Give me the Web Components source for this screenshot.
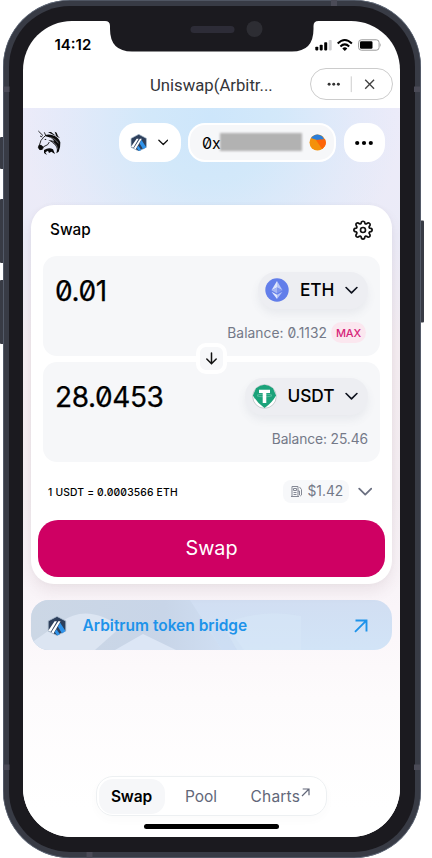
<!DOCTYPE html>
<html lang="en"><head><meta charset="utf-8"><title>Uniswap</title>
<style>html,body{margin:0;width:432px;height:858px;overflow:hidden;background:#fff}body{font-family:Inter,"Liberation Sans",sans-serif}</style></head>
<body><phone-frame>
<status-bar></status-bar><title-bar>Uniswap(Arbitr...</title-bar>
<swap-app></swap-app>
</phone-frame>
<script>
const define=(name,html)=>customElements.define(name,class extends HTMLElement{
  constructor(){super();const t=document.createElement('template');
    t.innerHTML='<style>:host,*{box-sizing:border-box}svg{display:block;flex:none}</style>'+html;
    this.attachShadow({mode:'open'}).append(t.content.cloneNode(true));}
});

define('phone-frame',`<style>
:host{display:block;position:relative;width:432px;height:858px}
.shell{margin-left:3px;width:417.5px;height:857.5px;padding:6px;border-radius:67px;background:#383b45;box-shadow:inset 0 0 0 .6px #667080;position:relative}
.bezel{height:100%;padding:15px 14px 14.5px;border-radius:61px;background:#1b1a1f}
.screen{height:816px;width:377px;border-radius:49px;overflow:hidden;background:#fff;display:flex;flex-direction:column}
.over{position:absolute;left:0;top:0}
</style><svg class="over" width="432" height="858"><g fill="#383b45"><rect x="0" y="137" width="6" height="32" rx="1"/><rect x="0" y="199" width="6" height="64" rx="1"/><rect x="0" y="280" width="6" height="64" rx="1"/><rect x="417" y="220.500" width="7" height="102" rx="1"/></g></svg>
<div class="shell"><div class="bezel"><div class="screen"><slot></slot></div></div></div>
<svg class="over" width="432" height="858"><g fill="#4b4b57"><rect x="3.500" y="86.500" width="6" height="5.500"/><rect x="414" y="86.500" width="6" height="5.500"/><rect x="3.500" y="764.500" width="6" height="5.500"/><rect x="414" y="764.500" width="6" height="5.500"/><rect x="331" y="0" width="6" height="6"/><rect x="86.500" y="852" width="6" height="5.500"/></g>
<path d="M105 20V21Q110 21 110 26V29Q110 51.500 132 51.500H292Q313.500 51.500 313.500 29V26Q313.500 21 318.500 21V20Z" fill="#1b1a1f"/><rect x="190.500" y="26" width="44" height="7" rx="3.500" fill="#2d2c37"/><circle cx="254.500" cy="29" r="8" fill="#2d2d33"/></svg>`);

define('status-bar',`<style>:host{display:flex;height:39px;padding:14px 18.500px 0 31.500px;align-items:flex-start;justify-content:space-between;flex:none}
b{font:600 15px/20px Inter,sans-serif;letter-spacing:0}svg{margin-top:3px}</style><b>14:12</b>
<svg width="68" height="16" viewBox="0 0 68 16"><rect x="1.300" y="8.800" width="3" height="3.600" rx=".8"/><rect x="5.700" y="6.800" width="3" height="5.600" rx=".8"/><rect x="10.200" y="4.300" width="3" height="8.100" rx=".8"/><rect x="14.700" y="2" width="3" height="10.400" rx=".8" fill="#d0d0d2"/>
<g fill="none" stroke="#000" stroke-width="2"><path d="M23.700 5.500Q30.800-1.500 37.900 5.500"/><path d="M26.400 8.500Q30.800 4.300 35.200 8.500"/></g><path d="M28.300 10.400Q30.800 8 33.300 10.400L30.800 13Z"/>
<rect x="44.600" y="1.800" width="20.500" height="10.400" rx="2.800" fill="#fff" stroke="#999"/><rect x="46" y="3.200" width="12.500" height="7.600" rx="1.300"/><path d="M66.300 5v4q1.500-2 0-4" fill="#999"/></svg>`);

define('title-bar',`<style>:host{display:flex;height:48px;padding:8px 7.500px 0 0;flex:none;font:400 16.700px/36px Roboto,sans-serif;color:#343539}
.t{width:287px;padding-left:127px;white-space:nowrap}.cap{width:82.500px;height:31.500px;border:1px solid #ccc;border-radius:16px}</style>
<div class="t"><slot></slot></div><svg class="cap" viewBox="0 0 81 30"><g fill="#333"><circle cx="18" cy="15.500" r="1.500"/><circle cx="22.700" cy="15.500" r="1.500"/><circle cx="27.400" cy="15.500" r="1.500"/></g><path d="M40.500 7.500v16" stroke="#ccc"/><path d="M54.700 11l9 9m0-9l-9 9" stroke="#444" stroke-width="1.400"/></svg>`);

define('chevron-icon',`<style>:host{display:block;width:var(--w,12px)}</style><svg width="100%" viewBox="0 0 12 8"><path d="M1 1.400L6 6.300L11 1.400" fill="none" stroke="currentColor" stroke-width="1.500" stroke-linecap="round" stroke-linejoin="round"/></svg>`);

define('arbitrum-icon',`<style>:host{display:block;width:var(--s,17px);height:var(--s,17px)}</style><svg width="100%" viewBox="0 0 20 20"><path d="M10 .4L18.800 5V15L10 19.600L1.200 15V5Z" fill="#2d3f5b" stroke="#aebfd0" stroke-width=".8"/><path d="M13 6.500l5.500 8.500-3.500 2.500L11 10.800zM9.500 13.300l3.400 4.900-2.700 1.300-2.400-3.500z" fill="#2f93ea"/><path d="M7.600 5.300H9.900L3.800 15.700 1.200 14.700zM11.300 5.300h2.200L6.500 17.500 4.300 16.300z" fill="#fff"/></svg>`);

define('token-button',`<style>:host{display:flex;align-items:center;height:37px;padding:0 10.500px 0 7.500px;border-radius:18px;background:#edeef2;box-shadow:0 5px 9px rgba(80,85,110,.08);color:#0d111c;font:500 17.300px/24px Inter,sans-serif}
.n{margin-left:11px;flex:1;color:#000;letter-spacing:-.05px}chevron-icon{--w:13px}</style><slot name="icon"></slot><span class="n"><slot></slot></span><chevron-icon></chevron-icon>`);

define('eth-icon',`<style>:host{display:block}</style><svg width="24" height="24" viewBox="0 0 24 24"><circle cx="12" cy="12" r="11.700" fill="#627eea"/><path d="M12 3v6.500l-5.500 2.800z" fill="#dfe6fb"/><path d="M12 3l5.500 9.300L12 9.500z" fill="#b9c7f7"/><path d="M6.500 12.300L12 9.500v6z" fill="#a7b7f3"/><path d="M17.500 12.300L12 9.500v6z" fill="#7f95ed"/><path d="M6.500 13.700l5.500 3.100V21z" fill="#e4eafd"/><path d="M17.500 13.700L12 16.800V21z" fill="#b6c4f7"/></svg>`);
define('usdt-icon',`<style>:host{display:block;margin-left:-1px}</style><svg width="25" height="25" viewBox="0 0 25 25"><circle cx="12.500" cy="12.500" r="11.800" fill="#fff" stroke="#bbc1c5" stroke-width=".8"/><path d="M4 4.300Q12.500-3 21 4.300L24.100 11.500Q20 19 12.500 24 5 19 .9 11.500Z" fill="#1ba27a"/><path d="M7 5.700h11v3.400h-3.700V19h-3.600V9.100H7z" fill="#fff"/><ellipse cx="12.500" cy="11.500" rx="7.500" ry="1.300" fill="none" stroke="#fff" stroke-opacity=".45" stroke-width=".6"/></svg>`);

define('currency-panel',`<style>:host{display:flex;flex-direction:column;height:100px;padding:15.500px 12px 0 12px;border-radius:14px;background:#f6f7f9}
.row{display:flex;justify-content:space-between;align-items:center;height:37px}.amt{font:400 28px/36px Inter,sans-serif;letter-spacing:-.4px;font-feature-settings:"zero";color:#000;padding-top:1.500px;-webkit-text-stroke:.25px #000}
.bal{display:flex;justify-content:flex-end;align-items:center;height:22px;margin-top:13px;font:400 13.800px/22px Inter,sans-serif;letter-spacing:var(--bls,0);font-feature-settings:"zero";color:#747988}
::slotted(token-button){width:var(--bw)}</style><div class="row"><span class="amt"><slot name="amount"></slot></span><slot name="token"></slot></div><div class="bal"><slot name="balance"></slot><slot name="max"></slot></div>`);

define('max-tag',`<style>:host{display:block;margin:0 2px 0 4px;width:35px;height:21px;border-radius:11px;background:#fbe7ef;color:#d6247a;font:500 11px/22px Inter,sans-serif;text-align:center;letter-spacing:-.1px}</style><slot></slot>`);

define('app-header',`<style>:host{display:flex;height:39px;align-items:center;padding:0 15.500px 0 14px}
.net,.acct,.more{height:39px;background:#fff;border-radius:17px;display:flex;align-items:center}.net{width:62px;margin-left:57px;padding:0 13px 0 10.500px;justify-content:space-between;color:#111;--w:10.500px;--s:17.500px}
.acct{width:148px;margin-left:7px;border:2px solid #fff;background:#f6f7f9;padding-left:12px;font:400 16px/34px Inter,sans-serif;font-feature-settings:"zero"}.mask{width:82px;height:18px;background:#b2b2b2;filter:blur(1px);margin-right:7px;margin-left:-1px;position:relative;top:-1px}.more{width:41px;margin-left:7.500px;justify-content:center}</style>
<svg width="25" height="26" viewBox="113 63 75 78"><g fill="none" stroke="#0b0b0b" stroke-width="2.600"><path d="M117 66L131 80M122 81L129 84"/><path d="M135 70L139 79L133 85L125 94L120 109L117 115L122 122L129 121L133 113L145 107L150 99"/></g><path d="M138 78Q150 75 160 79Q177 84 183 100Q184 115 178 128L171 133Q176 119 167 108Q161 100 147 94Q158 93 165 98Q158 85 138 82ZM146 69L155 69L170 81L158 76ZM166 68L172 71Q174 80 182 88L171 82ZM118 109l7-2 7 6-3 8-8 2-4-6zM134 123Q149 113 161 121L167 135 156 128 149 132 146 125 138 130 143 138 134 132zM134 93l6-4 1 4z" fill="#0b0b0b"/><path d="M151 86Q168 88 177 103M158 98Q174 105 174 121" fill="none" stroke="#e7eafa" stroke-width="1.300"/></svg>
<div class="net"><arbitrum-icon></arbitrum-icon><chevron-icon></chevron-icon></div>
<div class="acct">0x<span class="mask"></span><svg width="17" height="17" viewBox="0 0 17 17"><circle cx="8.500" cy="8.500" r="8" fill="#f4910b"/><path d="M2 4Q7-2 13 2L16.500 7 8 6 2 4Z" fill="#2b7ed9"/><path d="M7 6L16 5Q19 11 13 15z" fill="#fd6509"/></svg></div>
<div class="more"><svg width="20" height="8"><circle cx="3.200" cy="4" r="2.100"/><circle cx="10" cy="4" r="2.100"/><circle cx="16.800" cy="4" r="2.100"/></svg></div>`);

define('swap-card',`<style>:host{display:block;position:relative;height:379px;border-radius:23px;background:#fff;padding:0 7.500px;box-shadow:0 8px 14px rgba(110,75,90,.09),0 0 4px rgba(90,80,100,.04)}
.top{height:51px;display:flex;align-items:center;justify-content:space-between;padding:0 11.500px 2px 11.500px;font:500 15.300px/20px Inter,sans-serif}.panels{padding:0 4.500px 0 4.500px;display:flex;flex-direction:column;gap:6px;position:relative}
.flip{position:absolute;left:157px;top:87px;width:31px;height:31px;border:4px solid #fff;border-radius:10px;background:#f6f7f9;display:grid;place-items:center;z-index:2}
.rate{display:flex;height:57px;align-items:center;padding:2px 12.500px 0 9.500px;font:500 10.300px/20px Inter,sans-serif;font-feature-settings:"zero"}.gas{margin-left:auto;margin-right:8.500px;width:66px;height:23px;background:#f7f8fa;border-radius:8px;color:#747988;display:flex;align-items:center;gap:4.500px;padding-left:8px;font:400 13.800px/23px Inter,sans-serif}.rate chevron-icon{--w:14.500px;color:#6b7081}
.go{height:57.500px;margin:.5px 0 0 -.5px;width:347px;border-radius:20px;background:#cf0063;color:#fff;text-align:center;font:400 19.800px/57px Inter,sans-serif}.r{letter-spacing:.18px}</style>
<div class="top">Swap<svg width="20" height="20" viewBox="0 0 24 24" fill="none" stroke="#111" stroke-width="2"><circle cx="12" cy="12" r="3"/><path d="M10.200 2.200Q12 .8 13.800 2.200L14.500 4.500Q15.500 5 16.300 4.500Q18.500 2.800 20 4.200Q21.300 5.800 19.500 7.700Q19 9 20 9.800Q23 10 23 12Q23 14 20 14.300Q19 15 19.500 16.300Q21.300 18.500 19.900 19.900Q18.400 21.200 16.300 19.500Q15 19 14.300 20Q14 23 12 23Q10 23 9.700 20Q9 19 7.700 19.500Q5.600 21.200 4.100 19.900Q2.700 18.400 4.500 16.300Q5 15 4 14.300Q1 14 1 12Q1 10 4 9.700Q5 9 4.500 7.700Q2.800 5.600 4.100 4.100Q5.600 2.800 7.700 4.500Q9.300 5 9.700 4Z" stroke-linejoin="round"/></svg></div>
<div class="panels"><currency-panel style="--bw:110.500px;--bls:.04px"><span slot="amount">0.01</span><token-button slot="token"><eth-icon slot="icon"></eth-icon>ETH</token-button><span slot="balance">Balance: 0.1132</span><max-tag slot="max">MAX</max-tag></currency-panel>
<currency-panel style="--bw:123px;--bls:-.1px"><span slot="amount">28.0453</span><token-button slot="token"><usdt-icon slot="icon"></usdt-icon>USDT</token-button><span slot="balance">Balance: 25.46</span></currency-panel>
<div class="flip"><svg width="13" height="13" viewBox="0 0 13 13"><path d="M6.500 1v10.500M1.800 7l4.700 4.700L11.200 7" fill="none" stroke="#111" stroke-width="1.500" stroke-linecap="round"/></svg></div></div>
<div class="rate"><span class="r">1 USDT = 0.0003566 ETH</span><div class="gas"><svg width="12" height="13" viewBox="0 0 12 13" fill="none" stroke="#858995"><path d="M1 11.500V1.500h6v10zM0 11.500h8M2.500 3.500h3v2h-3zM2.500 7.500h3M2.500 9.500h3M7 6h1.500v4q1 1.500 2 0V4.500L8.500 2"/></svg>$1.42</div><chevron-icon></chevron-icon></div>
<div class="go">Swap</div>`);

define('bridge-banner',`<style>:host{display:block;height:50px;margin-top:16px;border-radius:18px;overflow:hidden;background:linear-gradient(180deg,#d1def2,#d2e4f7);}
.art{position:absolute}.row{height:50px;display:flex;align-items:center;position:relative;padding:1px 24px 0 15.500px;color:#1e93ea;font:600 15.500px/22px Inter,sans-serif;--s:20px}.l{margin-left:16px;flex:1}</style>
<svg class="art" width="361" height="50"><defs><linearGradient id="g"><stop stop-color="#ccd7e5"/><stop offset=".7" stop-color="#c8d5e8"/><stop offset="1" stop-color="#cfdef2"/></linearGradient><clipPath id="c"><rect width="361" height="50" rx="18"/></clipPath></defs><g clip-path="url(#c)"><path d="M0 0H159L191 50H0Z" fill="url(#g)"/><path d="M0 43L30 22Q49 8 72 17L91 26 64 50H0Z" fill="#dce5f2"/><path d="M84 50L112 34 145 50Z" fill="#dce6f5"/><path d="M175 24L191 50h22l-20-27z" fill="#cbdcf2" opacity=".7"/><path d="M191 24Q230 8 270 16v34h-64z" fill="#d8e7f8" opacity=".5"/></g></svg>
<div class="row"><arbitrum-icon></arbitrum-icon><span class="l"><slot></slot></span><svg width="14" height="14" viewBox="0 0 14 14" fill="none" stroke="#1e93ea" stroke-width="1.900"><path d="M1 12.800L12.500 1.300M1.500 1.500h11v11"/></svg></div>`);

define('nav-tabs',`<style>:host{display:flex;width:231px;height:39.500px;border:1px solid #edf0f2;border-radius:17px;background:#fff;padding:1.500px;font:400 15.500px/35px Inter,sans-serif;color:#626779;box-shadow:0 4px 10px rgba(80,90,100,.025)}
.on{width:66px;height:35px;background:#f6f7f9;border-radius:14px;text-align:center;color:#000;font-weight:600;letter-spacing:-.1px}.p{width:73px;text-align:center}.c{padding-left:13px;display:flex;letter-spacing:.2px}svg{margin:9px 0 0 1px}</style><div class="on">Swap</div><div class="p">Pool</div><div class="c">Charts<svg width="9" height="9" viewBox="0 0 9 9" fill="none" stroke="#626779" stroke-width="1.200"><path d="M1 8L8 1M1.700 1H8v6.300"/></svg></div>`);

define('swap-app',`<style>:host{display:flex;flex-direction:column;flex:1;padding-top:15px;background:radial-gradient(ellipse 190px 190px at 188px 10px,rgba(205,230,251,1) 0%,rgba(208,232,250,.9) 35%,rgba(215,232,250,.4) 75%,rgba(232,234,250,0) 100%),linear-gradient(#ecebf9 0,#ebebf7 130px,#f4edf1 240px,#f4eef2 390px,#faf5f9 500px,#fdfbfc 590px,#fff 700px)}
.main{padding:43px 8px 0}.foot{margin-top:auto;height:61px;display:flex;flex-direction:column;align-items:center}.home{width:134.500px;height:5px;border-radius:3px;background:#000;margin-top:8.500px}</style>
<app-header></app-header><div class="main"><swap-card></swap-card><bridge-banner>Arbitrum token bridge</bridge-banner></div><div class="foot"><nav-tabs></nav-tabs><div class="home"></div></div>`);
</script></body></html>
